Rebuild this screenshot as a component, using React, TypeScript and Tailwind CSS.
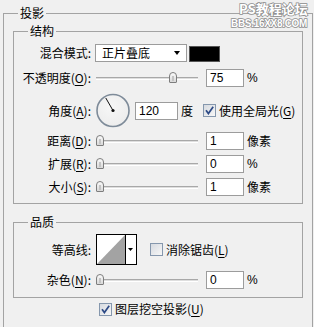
import React from "react";

const cjk = "font-['Noto_Sans_CJK_SC','Noto_Sans_CJK_JP',sans-serif]";
const num = "font-['Liberation_Sans',Arial,sans-serif]";

function U({ children }: { children: React.ReactNode }) {
  return <span className="underline underline-offset-[2px]">{children}</span>;
}

function Label({ children }: { children: React.ReactNode }) {
  return (
    <div className="w-[78px] pr-[1px] text-right shrink-0 whitespace-nowrap leading-[14px]">
      {children}
    </div>
  );
}

function Input({ value, w = 38 }: { value: string; w?: number }) {
  return (
    <div
      className={`${num} h-[18px] border border-[#9c9c9c] bg-white flex items-center pl-[3px] text-[12px] text-black shrink-0 ${
        w === 43 ? "w-[43px]" : "w-[38px]"
      }`}
    >
      {value}
    </div>
  );
}

function Slider({ pos }: { pos: number }) {
  return (
    <div className="relative w-[102px] h-[12px] shrink-0 flex items-center">
      <div className="w-full h-[3px] border-t border-[#a8a8a8] border-b border-b-white bg-[#dedede]" />
      <div
        className="absolute top-0 w-[8px] h-[11px] border border-[#7d7d7d] rounded-t-[4px] rounded-b-[1px] bg-linear-to-b from-[#fbfbfb] to-[#d8d8d8] flex justify-center pt-[3px]"
        style={{ left: pos }}
      >
        <div className="w-[2px] h-[5px] bg-[#c4c4c4]" />
      </div>
    </div>
  );
}

function Check({ checked }: { checked: boolean }) {
  return (
    <div className="w-[13px] h-[13px] border border-[#8597ad] bg-linear-to-br from-[#d6dae0] to-[#f7f7f7] flex items-center justify-center shrink-0">
      {checked && (
        <svg width="9" height="9" viewBox="0 0 9 9">
          <path d="M1 4.2 L3.4 7.6 L8.2 0.8" stroke="#2d4a86" strokeWidth="1.7" fill="none" />
        </svg>
      )}
    </div>
  );
}

function Dial() {
  const cx = 17;
  const cy = 17.5;
  const r = 16;
  const a = (120 * Math.PI) / 180;
  const ex = cx + 14.5 * Math.cos(a);
  const ey = cy - 14.5 * Math.sin(a);
  return (
    <svg width="35" height="35" viewBox="0 0 35 35" className="shrink-0">
      <defs>
        <radialGradient id="dg" cx="0.45" cy="0.4" r="0.7">
          <stop offset="0" stopColor="#f7f7f7" />
          <stop offset="1" stopColor="#ebebeb" />
        </radialGradient>
      </defs>
      <circle cx={cx} cy={cy} r={r} fill="url(#dg)" stroke="#7e8b99" strokeWidth="1.6" />
      <line x1={cx} y1={cy} x2={ex} y2={ey} stroke="#111" strokeWidth="1" />
      <circle cx={cx} cy={cy} r="1.6" fill="#111" />
    </svg>
  );
}

function Contour() {
  return (
    <svg width="41" height="31" viewBox="0 0 41 31" className="shrink-0">
      <rect x="0.5" y="0.5" width="40" height="30" fill="#fff" stroke="#000" />
      <polygon points="1,30 29,1 29,30" fill="#a3a3a3" />
      <line x1="29.5" y1="0.5" x2="29.5" y2="30.5" stroke="#000" />
      <polygon points="32,14 37,14 34.5,17" fill="#000" />
    </svg>
  );
}

export default function App() {
  return (
    <div
      className={`${cjk} relative w-[314px] h-[327px] overflow-hidden bg-[#f0f0f0] text-[12px] text-black flex flex-col`}
    >
      <fieldset className="ml-[3px] mt-[6px] w-[310px] h-[340px] shrink-0 border border-[#a3a3a3] flex flex-col">
        <legend className="ml-[14px] px-[2px] leading-[14px] text-[12px]">投影</legend>

        {/* 结构 */}
        <fieldset className="ml-[9px] mt-[4px] w-[290px] border border-[#a3a3a3] pb-[7px] flex flex-col">
          <legend className="ml-[14px] px-[2px] leading-[14px] text-[12px]">结构</legend>

          <div className="flex items-center h-[18px] mt-[6px]">
            <Label>混合模式:</Label>
            <div className="ml-[3px] w-[92px] h-[18px] border border-[#9c9c9c] bg-white flex items-center shrink-0">
              <span className="pl-[6px] leading-[14px]">正片叠底</span>
              <svg width="6" height="4" viewBox="0 0 6 4" className="ml-auto mr-[6px]">
                <polygon points="0,0 6,0 3,4" fill="#000" />
              </svg>
            </div>
            <div className="ml-[2px] w-[31px] h-[16px] border border-[#555] bg-black shrink-0 mt-[2px]" />
          </div>

          <div className="flex items-center h-[18px] mt-[7px]">
            <Label>
              不透明度(<U>O</U>):
            </Label>
            <div className="ml-[4px]">
              <Slider pos={73} />
            </div>
            <div className="ml-[8px]">
              <Input value="75" />
            </div>
            <span className={`${num} ml-[3px]`}>%</span>
          </div>

          <div className="flex items-center h-[35px] mt-[6px]">
            <Label>
              角度(<U>A</U>):
            </Label>
            <div className="ml-[4px]">
              <Dial />
            </div>
            <div className="ml-[4px]">
              <Input value="120" w={43} />
            </div>
            <span className="ml-[3px] leading-[14px]">度</span>
            <div className="ml-[10px]">
              <Check checked />
            </div>
            <span className="ml-[3px] leading-[14px] whitespace-nowrap">
              使用全局光(<U>G</U>)
            </span>
          </div>

          <div className="flex items-center h-[18px] mt-[4px]">
            <Label>
              距离(<U>D</U>):
            </Label>
            <div className="ml-[4px]">
              <Slider pos={0} />
            </div>
            <div className="ml-[8px]">
              <Input value="1" />
            </div>
            <span className="ml-[3px] leading-[14px]">像素</span>
          </div>

          <div className="flex items-center h-[18px] mt-[5px]">
            <Label>
              扩展(<U>R</U>):
            </Label>
            <div className="ml-[4px]">
              <Slider pos={0} />
            </div>
            <div className="ml-[8px]">
              <Input value="0" />
            </div>
            <span className={`${num} ml-[3px]`}>%</span>
          </div>

          <div className="flex items-center h-[18px] mt-[5px]">
            <Label>
              大小(<U>S</U>):
            </Label>
            <div className="ml-[4px]">
              <Slider pos={0} />
            </div>
            <div className="ml-[8px]">
              <Input value="1" />
            </div>
            <span className="ml-[3px] leading-[14px]">像素</span>
          </div>
        </fieldset>

        {/* 品质 */}
        <fieldset className="ml-[9px] mt-[11px] w-[290px] border border-[#a3a3a3] pb-[8px] flex flex-col">
          <legend className="ml-[14px] px-[2px] leading-[14px] text-[12px]">品质</legend>

          <div className="flex items-center h-[31px] mt-[5px]">
            <Label>等高线:</Label>
            <div className="ml-[4px]">
              <Contour />
            </div>
            <div className="ml-[13px]">
              <Check checked={false} />
            </div>
            <span className="ml-[3px] leading-[14px] whitespace-nowrap">
              消除锯齿(<U>L</U>)
            </span>
          </div>

          <div className="flex items-center h-[18px] mt-[6px]">
            <Label>
              杂色(<U>N</U>):
            </Label>
            <div className="ml-[4px]">
              <Slider pos={0} />
            </div>
            <div className="ml-[8px]">
              <Input value="0" />
            </div>
            <span className={`${num} ml-[3px]`}>%</span>
          </div>
        </fieldset>

        <div className="flex items-center h-[16px] mt-[3px] ml-[95px]">
          <Check checked />
          <span className="ml-[3px] leading-[14px] whitespace-nowrap">
            图层挖空投影(<U>U</U>)
          </span>
        </div>
      </fieldset>

      {/* watermark */}
      <div className="absolute left-[239px] top-[1px] text-[13px] leading-[16px] font-bold text-white [-webkit-text-stroke:1.5px_#8c8c8c] [paint-order:stroke_fill] whitespace-nowrap">
        PS教程论坛
      </div>
      <div
        className={`${num} absolute left-[231px] top-[17px] text-[10px] leading-[13px] tracking-[-0.3px] font-bold text-white [-webkit-text-stroke:1.5px_#8c8c8c] [paint-order:stroke_fill] whitespace-nowrap`}
      >
        BBS.16XX8.COM
      </div>
    </div>
  );
}
